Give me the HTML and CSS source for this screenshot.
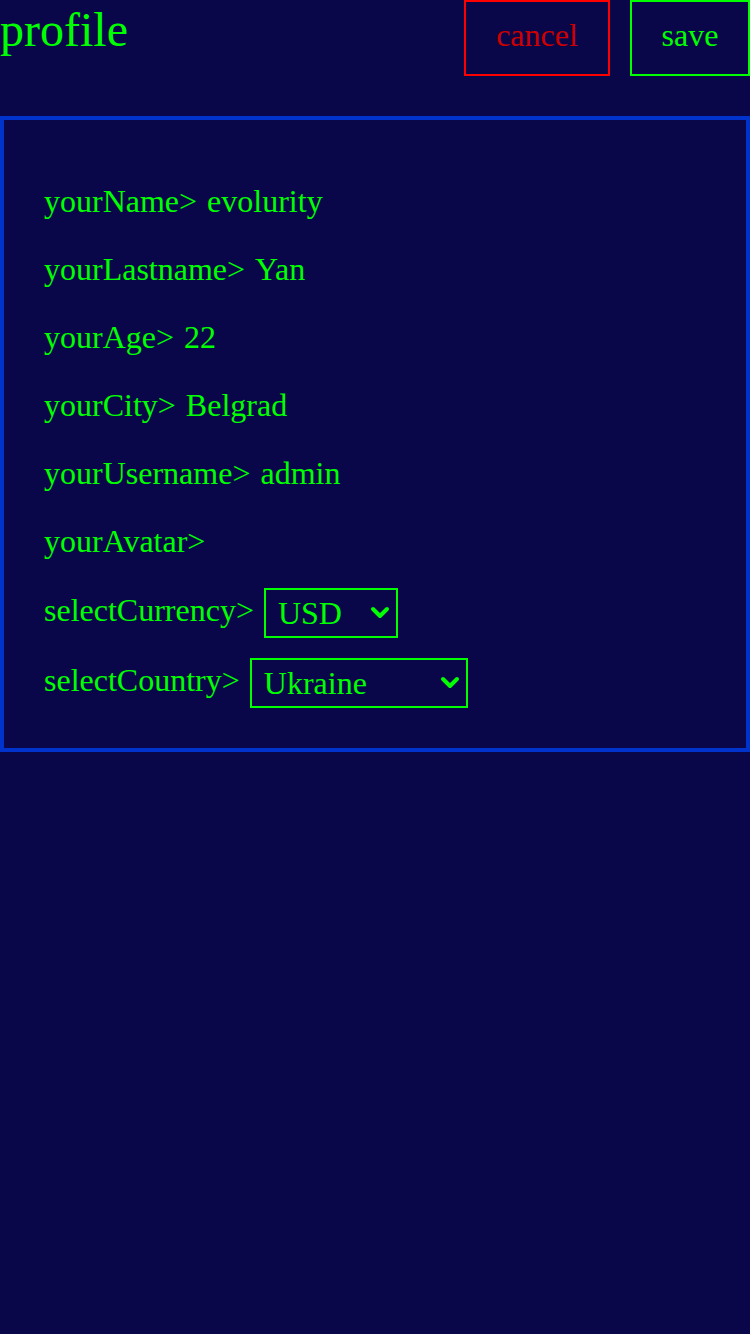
FILE: index.html
```html
<!DOCTYPE html>
<html>
<head>
<meta charset="utf-8">
<link rel="stylesheet" href="styles.css">
</head>
<body>
<header class="top">
  <h1 class="title">profile</h1>
  <div class="actions">
    <button class="btn btn-cancel">cancel</button>
    <button class="btn btn-save">save</button>
  </div>
</header>
<main class="panel">
  <div class="row">yourName&gt;<span class="val">evolurity</span></div>
  <div class="row">yourLastname&gt;<span class="val">Yan</span></div>
  <div class="row">yourAge&gt;<span class="val">22</span></div>
  <div class="row">yourCity&gt;<span class="val">Belgrad</span></div>
  <div class="row">yourUsername&gt;<span class="val">admin</span></div>
  <div class="row">yourAvatar&gt;</div>
  <div class="row-select">
    <span class="label">selectCurrency&gt;</span>
    <span class="select-wrap sw-currency">
      <select class="select"><option>USD</option><option>EUR</option></select>
      <svg class="chev" width="20" height="14" viewBox="0 0 20 14"><path d="M3 3 L10 10 L17 3" fill="none" stroke="#00ff00" stroke-width="4" stroke-linecap="round" stroke-linejoin="round"/></svg>
    </span>
  </div>
  <div class="row-select">
    <span class="label">selectCountry&gt;</span>
    <span class="select-wrap sw-country">
      <select class="select"><option>Ukraine</option><option>Serbia</option></select>
      <svg class="chev" width="20" height="14" viewBox="0 0 20 14"><path d="M3 3 L10 10 L17 3" fill="none" stroke="#00ff00" stroke-width="4" stroke-linecap="round" stroke-linejoin="round"/></svg>
    </span>
  </div>
</main>
</body>
</html>
```
FILE: styles.css
```css
html, body {
  margin: 0;
  padding: 0;
  background: #09064a;
  min-height: 100%;
}
body {
  font-family: "Liberation Serif", "Times New Roman", serif;
  color: #00ff00;
  width: 750px;
  height: 1334px;
}
.top {
  display: flex;
  justify-content: space-between;
  align-items: flex-start;
  height: 76px;
  margin-bottom: 40px;
}
.title {
  margin: 0;
  padding-top: 2px;
  font-weight: normal;
  font-size: 48px;
  line-height: 56px;
  color: #00ff00;
}
.actions {
  display: flex;
  gap: 20px;
}
.btn {
  font-family: "Liberation Serif", "Times New Roman", serif;
  font-size: 32px;
  background: transparent;
  height: 76px;
  padding: 0 0 5px 0;
  margin: 0;
  box-sizing: border-box;
}
.btn-cancel {
  width: 146px;
  border: 2px solid #ff0000;
  color: #cc0000;
}
.btn-save {
  width: 120px;
  border: 2px solid #00ff00;
  color: #00ff00;
}
.panel {
  border: 4px solid #0033cc;
  padding: 63px 40px 40px 40px;
  display: flex;
  flex-direction: column;
}
.row {
  font-size: 32px;
  line-height: 36px;
  margin-bottom: 32px;
}
.val {
  margin-left: 10px;
}
.row:nth-child(6) {
  margin-bottom: 29px;
}
.row-select {
  display: flex;
  align-items: center;
  gap: 10px;
  font-size: 32px;
  height: 50px;
  margin-bottom: 20px;
}
.row-select:last-child {
  margin-bottom: 0;
}
.label {
  line-height: 36px;
  position: relative;
  top: -3px;
}
.select-wrap {
  position: relative;
  display: block;
  height: 50px;
}
.select {
  appearance: none;
  -webkit-appearance: none;
  background: transparent;
  color: #00ff00;
  border: 2px solid #00ff00;
  border-radius: 0;
  font-family: "Liberation Serif", "Times New Roman", serif;
  font-size: 32px;
  height: 50px;
  box-sizing: border-box;
  padding: 0 0 0 12px;
  margin: 0;
  outline: none;
}
.sw-currency .select { width: 134px; }
.sw-country .select { width: 218px; }
.chev {
  position: absolute;
  top: 18px;
  pointer-events: none;
}
.sw-currency .chev { right: 8px; }
.sw-country .chev { right: 8px; }
```
